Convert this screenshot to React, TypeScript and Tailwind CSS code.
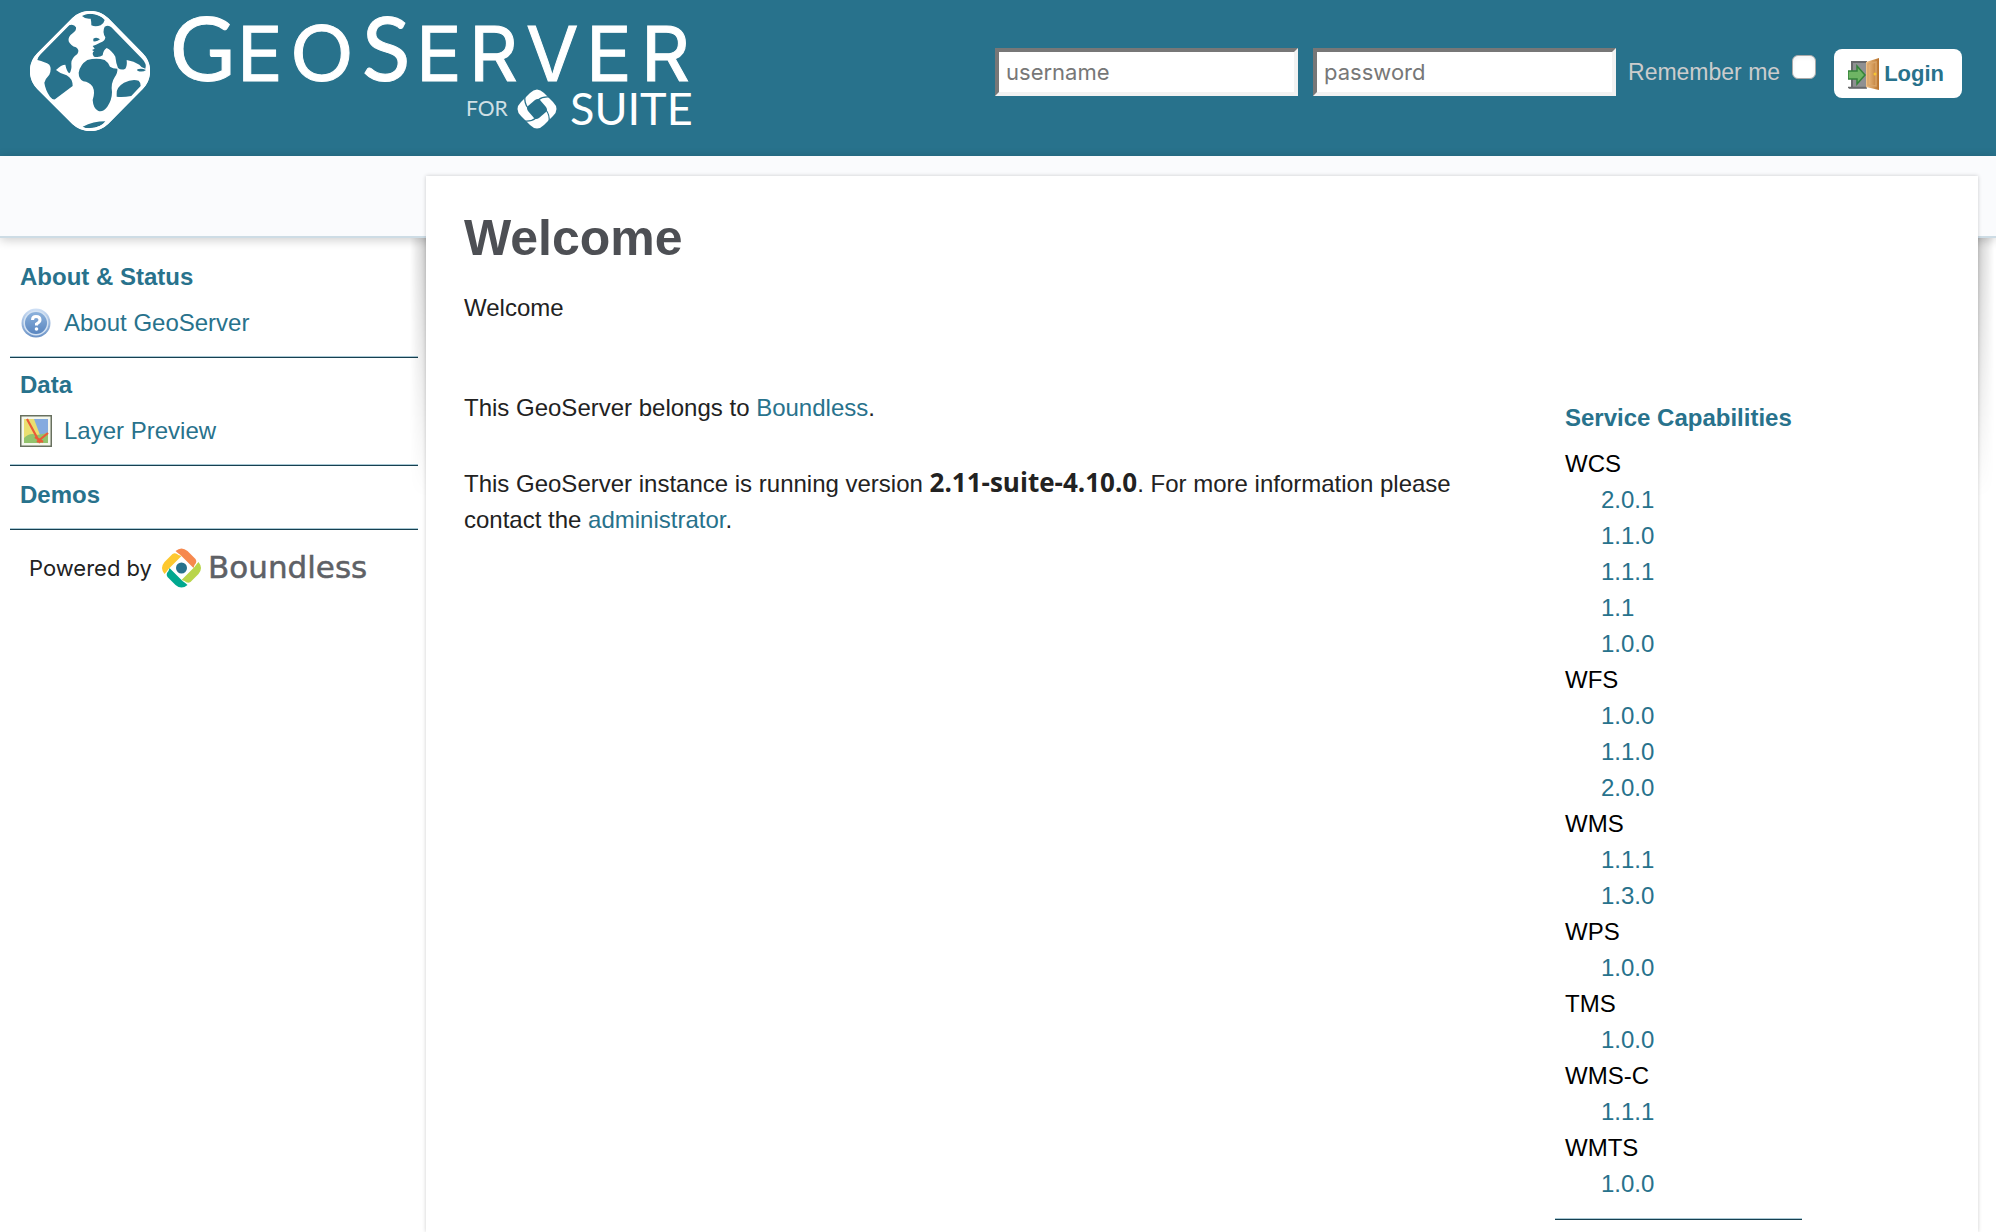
import React from "react";

const services: { name: string; versions: string[] }[] = [
  { name: "WCS", versions: ["2.0.1", "1.1.0", "1.1.1", "1.1", "1.0.0"] },
  { name: "WFS", versions: ["1.0.0", "1.1.0", "2.0.0"] },
  { name: "WMS", versions: ["1.1.1", "1.3.0"] },
  { name: "WPS", versions: ["1.0.0"] },
  { name: "TMS", versions: ["1.0.0"] },
  { name: "WMS-C", versions: ["1.1.1"] },
  { name: "WMTS", versions: ["1.0.0"] },
];

function GlobeMark() {
  return (
    <svg viewBox="90 33 360 360" className="size-[120px] shrink-0" aria-hidden="true">
      <path
        fill="#fff"
        d="M218 53Q240 33 270 33Q302 33 325 55L428 160Q450 182 450 213Q450 245 428 267L325 371Q302 393 270 393Q240 393 218 373L112 267Q90 245 90 213Q90 182 112 160Z"
      />
      <g fill="#28728c">
        <path d="M205 76Q222 70 228 82Q230 92 218 100Q203 110 206 124Q212 138 228 142Q240 150 232 162Q214 174 214 190Q216 212 208 220Q200 214 196 194Q184 194 168 210Q182 222 200 226Q218 236 218 258L165 298Q158 300 150 290Q136 270 133 248Q136 236 148 224Q156 206 148 194Q136 186 112 180Q114 170 124 158Z" />
        <path d="M246 48Q262 38 286 43Q306 50 314 60Q312 70 302 76Q286 82 274 76Q274 64 272 56Q256 58 246 48Z" />
        <path d="M314 80Q326 74 334 82L424 174Q442 192 436 206Q424 204 418 194Q402 184 380 180Q382 198 376 206Q364 212 354 204Q348 190 346 170Q334 150 320 144Q310 150 308 166Q298 174 282 170Q274 160 282 154L276 150L284 146L278 138L288 134L300 128Q316 124 316 112Q306 96 314 80Z" />
        <path d="M280 116Q290 110 300 118Q292 126 280 124Z" />
        <path d="M262 180Q290 172 314 180Q326 188 330 200Q338 206 352 206Q354 216 344 232Q332 250 336 276Q336 300 322 320Q308 338 294 332Q280 326 278 300Q286 276 278 260Q268 246 250 244Q236 236 236 218Q240 194 262 180Z" />
        <path d="M350 282Q348 262 372 248Q396 236 416 242Q424 250 422 258L394 288Q370 292 350 290Z" />
        <path d="M412 208Q424 204 438 210Q428 218 412 212Z" />
        <path d="M248 380Q280 364 316 364Q302 384 272 384Q256 386 248 380Z" />
      </g>
      <path
        fill="none"
        stroke="#fff"
        strokeWidth="9"
        d="M220 57Q242 37 270 37Q300 37 322 58L425 163Q446 184 446 213Q446 243 425 264L322 368Q300 389 270 389Q242 389 220 369L115 264Q94 243 94 213Q94 184 115 163Z"
      />
    </svg>
  );
}

function GeoServerLogo() {
  return (
    <a href="#home" aria-label="GeoServer for Suite" className="flex">
      <GlobeMark />
      <svg viewBox="170 0 522 140" className="-mt-[11px] ml-5 h-[140px] w-[522px] overflow-visible" fill="#fff" fontFamily="Lato, sans-serif">
        <text y="81" stroke="#fff" strokeWidth="1" fontFamily="Lato, sans-serif">
          <tspan x="170" fontSize="89">G</tspan>
          <tspan x="291" fontSize="77">O</tspan>
          <tspan x="362" fontSize="89">S</tspan>
        </text>
        <text y="81" stroke="#fff" strokeWidth="1" fontFamily="Inter, sans-serif" fontSize="76">
          <tspan x="237">E</tspan>
          <tspan x="416">E</tspan>
          <tspan x="469">R</tspan>
          <tspan x="526">V</tspan>
          <tspan x="586">E</tspan>
          <tspan x="641">R</tspan>
        </text>
        <text x="466" y="116" fontSize="21" fillOpacity="0.8">FOR</text>
        <text x="570" y="125" fontSize="45">SUITE</text>
        <g transform="translate(537 109)">
          <path d="M-7 -16Q0 -23 7 -16L16 -7Q23 0 16 7L7 16Q0 23 -7 16L-16 7Q-23 0 -16 -7Z" />
          <path fill="#28728c" d="M-2 -9Q1 -11 3 -9L9 -2Q11 1 9 3L2 9Q-1 11 -3 9L-9 2Q-11 -1 -9 -3Z" />
          <g fill="none" stroke="#28728c" strokeWidth="1.200">
            {[0, 90, 180, 270].map((angle) => (
              <path key={angle} transform={`rotate(${angle})`} d="M-12 -13Q-13 -6 -9 -1" />
            ))}
          </g>
        </g>
      </svg>
    </a>
  );
}

function DoorIcon() {
  return (
    <svg viewBox="0 0 32 32" className="size-8" aria-hidden="true">
      <defs>
        <linearGradient id="door" x1="0" x2="1">
          <stop offset="0" stopColor="#f0c48c" />
          <stop offset="1" stopColor="#b8722c" />
        </linearGradient>
      </defs>
      <path d="M4 3H19V31H1V29H4Z" fill="#8f9092" />
      <path d="M4 29V4H19" fill="none" stroke="#68696b" strokeWidth="2" />
      <path d="M0 29.500H18" stroke="#68696b" strokeWidth="1.500" />
      <path d="M18 4L31 0V32L18 29Z" fill="url(#door)" />
      <path d="M20 6L28 4V28L20 27Z" fill="none" stroke="#d9a468" strokeWidth="1.500" />
      <circle cx="27" cy="16" r="1.500" fill="#f7c531" />
      <path d="M0 13H9V8L17 17L9 26V21H0Z" fill="#6fb564" stroke="#34833a" strokeWidth="1.500" />
    </svg>
  );
}

function HelpIcon() {
  return (
    <svg viewBox="0 0 32 32" className="size-8 shrink-0" aria-hidden="true">
      <defs>
        <linearGradient id="help" x1="0" y1="0" x2="0" y2="1">
          <stop offset="0" stopColor="#8db2dc" />
          <stop offset="1" stopColor="#5a86c0" />
        </linearGradient>
        <linearGradient id="rim" x1="0" y1="0" x2="0" y2="1">
          <stop offset="0" stopColor="#d0e1f6" />
          <stop offset="1" stopColor="#6a92c6" />
        </linearGradient>
      </defs>
      <circle cx="16" cy="16" r="14.500" fill="url(#rim)" />
      <circle cx="16" cy="16" r="12.500" fill="#d5e3f3" />
      <circle cx="16" cy="16" r="11" fill="url(#help)" />
      <path d="M12.500 13Q12.500 9.500 16 9.500Q20 9.500 20 13Q20 15 16.500 17V18.500" fill="none" stroke="#fff" strokeWidth="3" />
      <circle cx="16.500" cy="22" r="1.800" fill="#fff" />
    </svg>
  );
}

function MapIcon() {
  return (
    <svg viewBox="0 0 32 32" className="size-8 shrink-0" aria-hidden="true">
      <rect x="0.750" y="0.750" width="30.500" height="30.500" fill="#f4f7ec" stroke="#68705f" strokeWidth="1.500" />
      <rect x="4" y="4" width="24" height="24" fill="#eadf70" />
      <path d="M14 4H28V18L20 20Z" fill="#84abdf" />
      <path d="M4 23Q10 17 17 20L28 18V28H4Z" fill="#92c36c" />
      <path d="M7 4L20 28M17 27L28 18M15 22L23 27" fill="none" stroke="#ea5a38" strokeWidth="2.200" />
    </svg>
  );
}

const blades = [
  { angle: 0, color: "#f6894e" },
  { angle: 90, color: "#b9d54a" },
  { angle: 180, color: "#00a88f" },
  { angle: 270, color: "#fdc82f" },
];

function PoweredBy() {
  return (
    <a href="#boundless" aria-label="Powered by Boundless" className="mt-4 ml-4 block">
      <svg viewBox="0 0 360 44" className="h-11 w-[360px]">
        <text x="3" y="30" fontSize="22" fill="#222" fontFamily="Inter, sans-serif">Powered by</text>
        <g transform="translate(155.500 22)">
          {blades.map((b) => (
            <path
              key={b.angle}
              fill={b.color}
              transform={`rotate(${b.angle})`}
              d="M-6 -17Q0 -22 6 -17L14 -9Q16 -6 13 -3L12 0L-1 -13Q-4 -15 -6 -17Z"
            />
          ))}
          <circle r="5.500" fill="#28728c" />
        </g>
        <text x="182" y="32" fontSize="31" fill="#5e6166" stroke="#5e6166" strokeWidth="0.500" fontFamily="DejaVu Sans, sans-serif">
          Boundless
        </text>
      </svg>
    </a>
  );
}

function Rule() {
  return <div className="h-0.5 border-t border-b border-t-[#a9c9d5] border-b-[#174050]" />;
}

function MenuLink({ icon, label }: { icon: React.ReactNode; label: string }) {
  return (
    <a href="#" className="mt-2.5 flex h-9 items-center gap-3 text-[#28728c]">
      {icon}
      {label}
    </a>
  );
}

const link = "text-[#28728c]";
const field =
  "h-12 w-[303px] rounded-none border-4 border-t-[#777] border-l-[#777] border-r-[#f2f2f2] border-b-[#f2f2f2] bg-white px-[7px] font-[Inter,sans-serif] text-[22px] text-black placeholder:text-[#777] placeholder:opacity-100";
const sideShadow =
  "absolute top-[62px] h-[260px] w-4 from-black/20 to-transparent [mask-image:linear-gradient(to_bottom,black,transparent)]";

export default function App() {
  return (
    <div className="relative flex min-h-screen flex-col overflow-hidden bg-white font-['Liberation_Sans',Arial,sans-serif] text-2xl leading-9 text-[#222]">
      <header className="flex h-[156px] shrink-0 items-start justify-between bg-[#28728c] pt-[11px] pr-[34px] pl-[30px]">
        <GeoServerLogo />
        <form className="mt-[37px] flex items-start" onSubmit={(e) => e.preventDefault()}>
          <input aria-label="username" placeholder="username" className={field} />
          <input aria-label="password" type="password" placeholder="password" className={field + " mr-3 ml-[15px]"} />
          <label htmlFor="remember" className="mt-1.5 mr-3 text-[23px] text-[#ccc]">
            Remember me
          </label>
          <input
            id="remember"
            type="checkbox"
            className="mt-[7px] mr-[18px] size-6 appearance-none rounded-md border border-[#aaa] bg-white shadow-inner"
          />
          <button className="mt-px flex h-[49px] items-center gap-1 rounded-lg bg-white pr-[18px] pl-3.5 text-[22px] font-bold text-[#28728c]">
            <DoorIcon />
            Login
          </button>
        </form>
      </header>
      <div className="absolute inset-x-0 top-[156px] h-[82px] border-b-2 border-[#cddce5] bg-[#fafbfd] shadow-[0_2px_10px_rgba(0,0,0,0.2)]" />
      <div className="relative flex grow items-stretch">
        <nav className="w-[426px] shrink-0 pt-[103px] pr-2 pl-2.5">
          <section className="px-2.5 pb-[15px]">
            <h2 className="font-bold text-[#28728c]">About &amp; Status</h2>
            <MenuLink icon={<HelpIcon />} label="About GeoServer" />
          </section>
          <Rule />
          <section className="px-2.5 pt-[9px] pb-[15px]">
            <h2 className="font-bold text-[#28728c]">Data</h2>
            <MenuLink icon={<MapIcon />} label="Layer Preview" />
          </section>
          <Rule />
          <section className="px-2.5 pt-[11px] pb-[15px]">
            <h2 className="font-bold text-[#28728c]">Demos</h2>
          </section>
          <Rule />
          <PoweredBy />
        </nav>
        <main className="relative mt-5 mr-[18px] grow bg-white px-[38px] pt-8 pb-3 shadow-[0_0_4px_rgba(0,0,0,0.2)]">
          <div className={sideShadow + " right-full bg-linear-to-l"} />
          <div className={sideShadow + " left-full bg-linear-to-r"} />
          <h1 className="text-[50px] leading-[60px] font-bold text-[#4d4f54]">Welcome</h1>
          <p className="mt-[22px]">Welcome</p>
          <div className="mt-16 flex items-start justify-between">
            <div className="max-w-[1010px] grow">
              <p>
                This GeoServer belongs to <a href="#" className={link}>Boundless</a>.
              </p>
              <p className="mt-10">
                This GeoServer instance is running version{" "}
                <strong className="font-['Open_Sans',sans-serif] text-[26px] leading-none font-bold">2.11-suite-4.10.0</strong>. For more
                information please contact the <a href="#" className={link}>administrator</a>.
              </p>
            </div>
            <aside className="mr-[138px] w-[247px] shrink-0 pt-2.5 text-black">
              <h2 className="px-2.5 font-bold text-[#28728c]">Service Capabilities</h2>
              <ul className="mt-2.5 mb-4 px-2.5">
                {services.map((s) => (
                  <li key={s.name}>
                    {s.name}
                    <ul className="pl-9">
                      {s.versions.map((v) => (
                        <li key={v}>
                          <a href="#" className={link}>{v}</a>
                        </li>
                      ))}
                    </ul>
                  </li>
                ))}
              </ul>
              <Rule />
            </aside>
          </div>
        </main>
      </div>
    </div>
  );
}
